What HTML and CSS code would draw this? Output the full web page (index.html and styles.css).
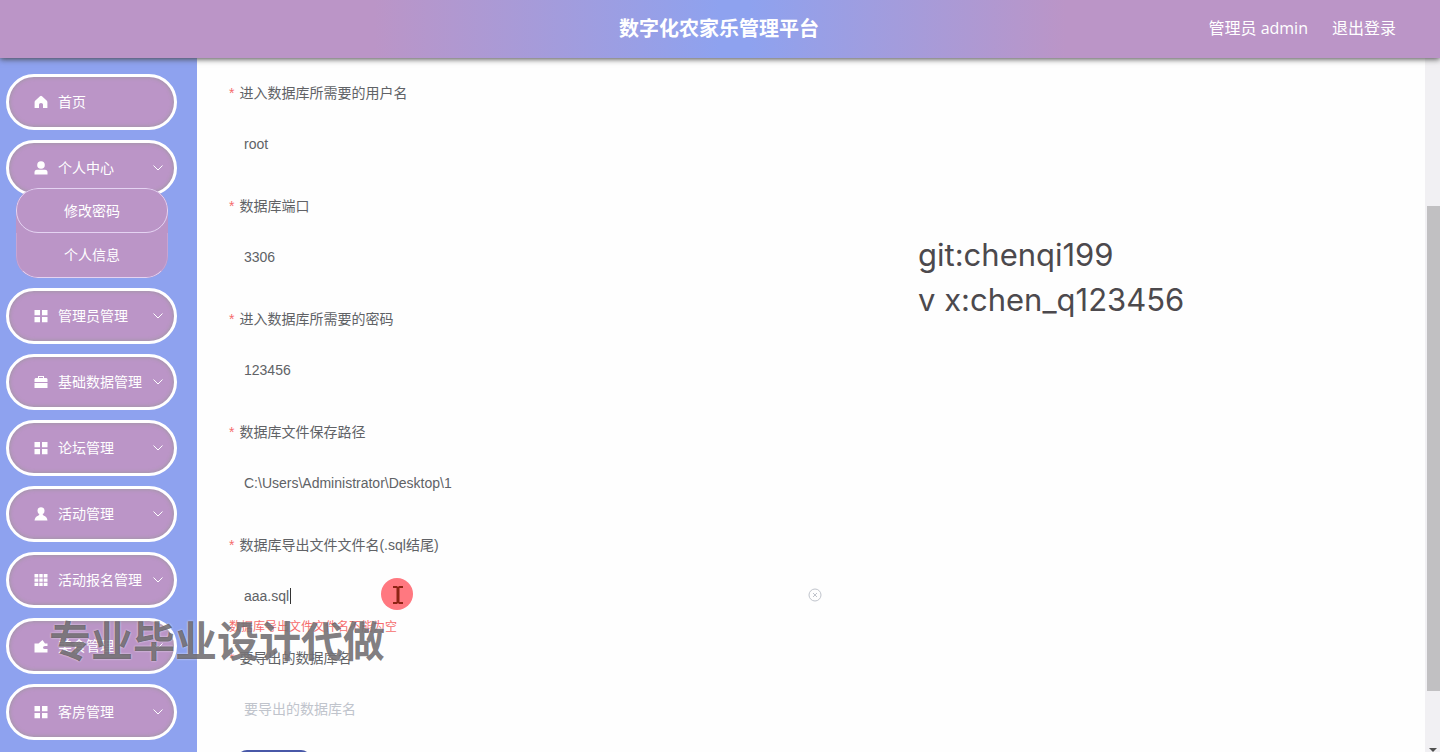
FILE: index.html
```
<!DOCTYPE html>
<html lang="zh-CN">
<head>
<meta charset="utf-8">
<title>数字化农家乐管理平台</title>
<link rel="stylesheet" href="styles.css">
</head>
<body>
<svg class="sprite" aria-hidden="true">
  <symbol id="home" viewBox="0 0 14 14"><path d="M7 .8Q7.400 .8 8 1.300L12.600 5.500Q13.400 6.300 13.400 7.200V13H9V9.500Q9 8 7 8T5 9.500V13H.6V7.200Q.6 6.300 1.400 5.500L6 1.300Q6.600 .8 7 .8Z"/></symbol>
  <symbol id="person" viewBox="0 0 14 14"><circle cx="7" cy="4" r="3.800"/><path d="M3 8.800H11Q13.500 8.800 13.500 11.500V13.500H.5V11.500Q.5 8.800 3 8.800Z"/></symbol>
  <symbol id="user" viewBox="0 0 14 14"><circle cx="7" cy="3.800" r="3.500"/><path d="M5.500 7H8.500L9.500 8.500Q13 9.500 13.500 13.500H.5Q1 9.500 4.500 8.500Z"/></symbol>
  <symbol id="grid" viewBox="0 0 14 14"><path d="M.5 1H6V6.200H.5ZM8 1H13.500V6.200H8ZM.5 8H6V13.200H.5ZM8 8H13.500V13.200H8Z"/></symbol>
  <symbol id="nine" viewBox="0 0 14 14"><path d="M.5 1H4.300V4.400H.5ZM5.300 1H8.700V4.400H5.300ZM9.700 1H13.500V4.400H9.700ZM.5 5.400H4.300V8.800H.5ZM5.300 5.400H8.700V8.800H5.300ZM9.700 5.400H13.500V8.800H9.700ZM.5 9.800H4.300V13H.5ZM5.300 9.800H8.700V13H5.300ZM9.700 9.800H13.500V13H9.700Z"/></symbol>
  <symbol id="case" viewBox="0 0 14 14"><path fill-rule="evenodd" d="M4 3V1H10V3H12.500L13.500 4V7H.5V4L1.500 3ZM5 3H9V2H5ZM.5 8H13.500V13H.5Z"/></symbol>
  <symbol id="wallet" viewBox="0 0 14 14"><path d="M.5 4.500H4.500L8.500 1 11 4.500H13.500V7H11Q9 7 9 8.500T11 10H13.500V13.500H.5Z"/></symbol>
  <symbol id="arrow" viewBox="0 0 12 12"><path d="M1.500 3.500 6 8 10.500 3.500" fill="none" stroke="currentColor"/></symbol>
</svg>
<header class="topbar">
  <h1 class="brand">数字化农家乐管理平台</h1>
  <div class="account"><span>管理员 admin</span><a class="logout" href="#">退出登录</a></div>
</header>
<div class="shell">
  <nav class="sidebar">
    <button class="item"><svg class="icon"><use href="#home"/></svg><span class="name">首页</span></button>
    <div class="group">
      <button class="item"><svg class="icon"><use href="#person"/></svg><span class="name">个人中心</span><svg class="arrow"><use href="#arrow"/></svg></button>
      <div class="submenu"><a class="subitem" href="#">修改密码</a><a class="subitem" href="#">个人信息</a></div>
    </div>
    <button class="item"><svg class="icon"><use href="#grid"/></svg><span class="name">管理员管理</span><svg class="arrow"><use href="#arrow"/></svg></button>
    <button class="item"><svg class="icon"><use href="#case"/></svg><span class="name">基础数据管理</span><svg class="arrow"><use href="#arrow"/></svg></button>
    <button class="item"><svg class="icon"><use href="#grid"/></svg><span class="name">论坛管理</span><svg class="arrow"><use href="#arrow"/></svg></button>
    <button class="item"><svg class="icon"><use href="#user"/></svg><span class="name">活动管理</span><svg class="arrow"><use href="#arrow"/></svg></button>
    <button class="item"><svg class="icon"><use href="#nine"/></svg><span class="name">活动报名管理</span><svg class="arrow"><use href="#arrow"/></svg></button>
    <button class="item"><svg class="icon"><use href="#wallet"/></svg><span class="name">美食管理</span><svg class="arrow"><use href="#arrow"/></svg></button>
    <button class="item"><svg class="icon"><use href="#grid"/></svg><span class="name">客房管理</span><svg class="arrow"><use href="#arrow"/></svg></button>
  </nav>
  <main class="content">
    <form class="form">
      <div class="field"><label class="label" for="f1">进入数据库所需要的用户名</label><input class="input" id="f1" value="root"></div>
      <div class="field"><label class="label" for="f2">数据库端口</label><input class="input" id="f2" value="3306"></div>
      <div class="field"><label class="label" for="f3">进入数据库所需要的密码</label><input class="input" id="f3" value="123456"></div>
      <div class="field"><label class="label" for="f4">数据库文件保存路径</label><input class="input" id="f4" value="C:\Users\Administrator\Desktop\1"></div>
      <div class="field">
        <label class="label" for="f5">数据库导出文件文件名(.sql结尾)</label>
        <div class="control"><input class="input" id="f5" value="aaa.sql"><i class="caret"></i>
          <button class="clear" type="button" aria-label="清空"><svg class="clear-icon" viewBox="0 0 14 14"><circle cx="7" cy="7" r="6"/><path d="M5 5 9 9M9 5 5 9"/></svg></button></div>
        <p class="error">数据库导出文件文件名不能为空</p>
      </div>
      <div class="field last"><label class="label" for="f6">要导出的数据库名</label><input class="input" id="f6" placeholder="要导出的数据库名"></div>
      <button class="submit" type="button" aria-label="提交"></button>
    </form>
  </main>
  <div class="scrollbar"><div class="thumb"></div><i class="down"></i></div>
</div>
<p class="contact">git:chenqi199<br>v x:chen_q123456</p>
<p class="watermark">专业毕业设计代做</p>
<svg class="pointer" viewBox="0 0 32 32"><circle cx="16" cy="16" r="16"/><path d="M12 8H16L17 9 18 8H22V10H18.500V24H22V26H18L17 25 16 26H12V24H15.500V10H12Z"/></svg>
</body>
</html>
```
FILE: styles.css
```
* { box-sizing: border-box; }
body { margin: 0; height: 100vh; overflow: hidden; display: flex; flex-direction: column; background: #fefefe; color: #606266; font: 14px/20px "Liberation Sans", "Noto Sans CJK SC", sans-serif; }
button, input { font: inherit; }
p, h1 { margin: 0; }
a { color: inherit; text-decoration: none; }
.sprite { position: absolute; width: 0; height: 0; }
.topbar { position: relative; z-index: 1; flex: none; height: 58px; display: grid; grid-template-columns: 1fr auto 1fr; align-items: center; padding: 0 44px 0 42px; color: #fff; background: linear-gradient(90deg, #bb95c7 26%, #8ea2ef 50%, #8ea2ef 52%, #bb95c7 74%); box-shadow: 0 1px 6px #444; }
.brand { grid-column: 2; font-size: 20px; line-height: 28px; }
.account { display: flex; justify-content: flex-end; gap: 24px; padding-bottom: 2px; font: 16px/24px "Open Sans", "Noto Sans CJK SC", sans-serif; }
.shell { flex: 1; min-height: 0; display: flex; }
.sidebar { flex: none; width: 197px; padding: 16px 20px 0 6px; display: flex; flex-direction: column; gap: 10px; background: #8ea2ef; color: #fff; overflow: hidden; }
.item { flex: none; width: 100%; height: 56px; display: flex; align-items: center; padding: 0 10px 0 25px; border: 3px solid #fff; border-radius: 28px; background: #bb95c7; color: #fff; box-shadow: inset 0 0 4px #999; text-align: left; }
.icon { flex: none; width: 14px; height: 14px; margin-right: 10px; fill: #fff; }
.name { flex: 1; white-space: nowrap; }
.arrow { flex: none; width: 12px; height: 12px; }
.group { flex: none; }
.submenu { margin: -8px 9px 0 10px; position: relative; border-radius: 22px; background: #bb95c7; overflow: hidden; }
.subitem { display: block; height: 45px; line-height: 44px; text-align: center; border: 1px solid #e4d3f2; border-radius: 22px; }
.subitem + .subitem { border-top: 0; border-radius: 0 0 22px 22px; border-left-color: #c7a5d3; border-right-color: #c7a5d3; }
.content { flex: 1; min-width: 0; padding: 17px 0 0 28px; overflow: hidden; }
.form { width: 50%; }
.field { margin-bottom: 17px; }
.last { margin-bottom: 14px; }
.label { display: block; height: 42px; line-height: 36px; padding-left: 4px; }
.label::before { content: "*"; color: #f56c6c; margin-right: 5px; }
.input { display: block; width: 100%; height: 54px; padding: 0 19px; border: 0; background: transparent; color: #606266; outline: 0; }
.input::placeholder { color: #c0c4cc; opacity: 1; }
.control { position: relative; }
.caret { position: absolute; left: 65px; top: 19px; width: 1px; height: 16px; background: #333; }
.clear { position: absolute; right: 3px; top: 19px; padding: 0; border: 0; background: none; }
.clear-icon { display: block; width: 14px; height: 14px; fill: none; stroke: #c0c4cc; }
.error { height: 12px; margin-top: -2px; margin-bottom: -10px; padding-left: 4px; font-size: 12px; line-height: 12px; color: #f56c6c; }
.submit { display: block; width: 74px; height: 40px; margin-left: 12px; border: 0; border-radius: 10px; background: #4858a8; }
.scrollbar { position: relative; flex: none; width: 15px; padding: 148px 0 0 2px; background: #f1f0f3; }
.thumb { height: 485px; background: #c1c0c2; }
.down { position: absolute; right: 3px; bottom: 0; border: 4px solid transparent; border-top-color: #505050; border-bottom: 0; }
.contact { position: absolute; left: 918px; top: 232px; font: 31px/45px Inter, sans-serif; color: #4c494d; }
.watermark { position: absolute; z-index: 2; left: 49px; top: 611px; font: bold 42px/56px "Noto Sans CJK SC", sans-serif; color: rgba(45, 40, 45, .62); text-shadow: 0 0 2px rgba(255, 255, 255, .8); }
.pointer { position: absolute; left: 381px; top: 578px; width: 32px; height: 32px; fill: #ff7880; }
.pointer path { fill: #8d2415; }
```
